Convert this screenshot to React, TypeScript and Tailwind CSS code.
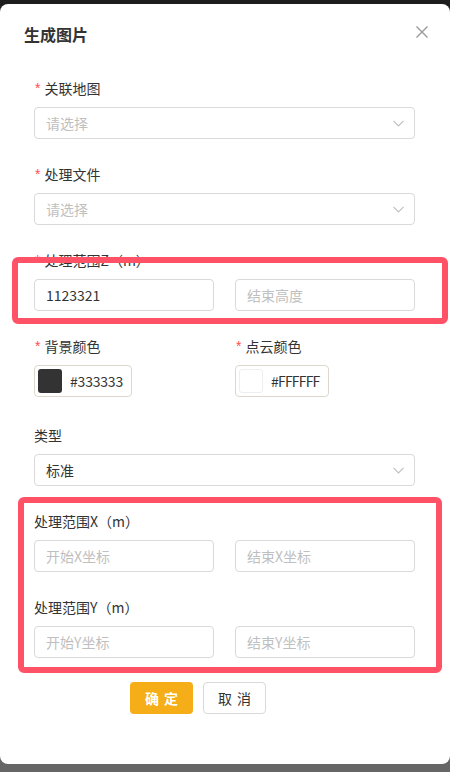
import React from 'react';

const FONT = '"Noto Sans CJK SC", "Noto Sans", sans-serif';

const Chevron = () => (
    <svg width="11" height="7" viewBox="0 0 11 7" fill="none" className="shrink-0">
        <path d="M0.5 0.8 L5.5 6 L10.5 0.8" stroke="#bfbfbf" strokeWidth="1.1" />
    </svg>
);

const Label = ({ text, required }: { text: string; required?: boolean }) => (
    <div className="h-[22px] leading-[22px] text-[14px] text-[#333] mb-[8px] flex items-center">
        {required && <span className="text-[#ff4d4f] mr-[4px] text-[14px] leading-none pl-[1px]" style={{ fontFamily: '"Liberation Sans", sans-serif' }}>*</span>}
        <span>{text}</span>
    </div>
);

const Select = ({ value, placeholder }: { value?: string; placeholder?: string }) => (
    <div className="h-[32px] border border-[#d9d9d9] rounded-[4px] pl-[11px] pr-[10px] flex items-center justify-between text-[14px]">
        {value ? <span className="text-[#333]">{value}</span> : <span className="text-[#bfbfbf]">{placeholder}</span>}
        <Chevron />
    </div>
);

const Input = ({ value, placeholder }: { value?: string; placeholder?: string }) => (
    <div className="h-[32px] border border-[#d9d9d9] rounded-[4px] px-[11px] flex items-center text-[14px]">
        {value ? <span className="text-[#333]">{value}</span> : <span className="text-[#bfbfbf]">{placeholder}</span>}
    </div>
);

const ColorPicker = ({ color, light }: { color: string; light?: boolean }) => (
    <div className="inline-flex h-[32px] items-center gap-[8px] border border-[#ddd8cc] rounded-[4px] pl-[3px] pr-[8px]">
        <div className={`w-[24px] h-[24px] rounded-[3px] ${light ? 'border border-[#eeeeee]' : ''}`} style={{ backgroundColor: color }} />
        <span className={`text-[14px] text-[#333] ${light ? 'tracking-[-0.8px]' : 'tracking-[-0.2px]'}`}>{color}</span>
    </div>
);

export default function App() {
    return (
        <div className="w-[450px] h-[772px] pt-[4px] bg-[linear-gradient(to_bottom,#1d1d1d_50%,#666666_50%)]" style={{ fontFamily: FONT }}>
            <div className="relative h-[760px] bg-white rounded-[8px]">
                <div className="pt-[18px] pl-[24px] pr-[22px] flex items-start justify-between">
                    <h3 className="text-[16px] leading-[24px] font-bold text-[#333]">生成图片</h3>
                    <button className="mt-[4px]">
                        <svg width="12" height="12" viewBox="0 0 12 12">
                            <path d="M0.5 0.5 L11.5 11.5 M11.5 0.5 L0.5 11.5" stroke="#999" strokeWidth="1.4" />
                        </svg>
                    </button>
                </div>

                <div className="pt-[31px] pl-[34px] pr-[35px]">
                    <div className="mb-[24px]">
                        <Label text="关联地图" required />
                        <Select placeholder="请选择" />
                    </div>
                    <div className="mb-[24px]">
                        <Label text="处理文件" required />
                        <Select placeholder="请选择" />
                    </div>
                    <div className="mb-[24px]">
                        <Label text="处理范围Z（m）" required />
                        <div className="grid grid-cols-2 gap-[21px]">
                            <Input value="1123321" />
                            <Input placeholder="结束高度" />
                        </div>
                    </div>
                    <div className="grid grid-cols-2 gap-[21px] mb-[26px]">
                        <div>
                            <Label text="背景颜色" required />
                            <ColorPicker color="#333333" />
                        </div>
                        <div>
                            <Label text="点云颜色" required />
                            <ColorPicker color="#FFFFFF" light />
                        </div>
                    </div>
                    <div className="mb-[24px]">
                        <Label text="类型" />
                        <Select value="标准" />
                    </div>
                    <div className="mb-[24px]">
                        <Label text="处理范围X（m）" />
                        <div className="grid grid-cols-2 gap-[21px]">
                            <Input placeholder="开始X坐标" />
                            <Input placeholder="结束X坐标" />
                        </div>
                    </div>
                    <div className="mb-[24px]">
                        <Label text="处理范围Y（m）" />
                        <div className="grid grid-cols-2 gap-[21px]">
                            <Input placeholder="开始Y坐标" />
                            <Input placeholder="结束Y坐标" />
                        </div>
                    </div>
                    <div className="flex gap-[10px] ml-[96px]">
                        <button className="w-[63px] h-[32px] rounded-[4px] bg-[#f5ae17] text-white text-[14px] font-bold flex items-center justify-center gap-[5px]">
                            <span>确</span><span>定</span>
                        </button>
                        <button className="w-[63px] h-[32px] rounded-[4px] border border-[#d9d9d9] bg-white text-[#333] text-[14px] flex items-center justify-center gap-[5px]">
                            <span>取</span><span>消</span>
                        </button>
                    </div>
                </div>

                {/* annotation boxes */}
                <div className="absolute left-[12px] top-[253px] w-[436px] h-[67px] border-[6px] border-[#ff5266] rounded-[6px] pointer-events-none" />
                <div className="absolute left-[18px] top-[493px] w-[424px] h-[176px] border-[6px] border-[#ff5266] rounded-[6px] pointer-events-none" />
            </div>
        </div>
    );
}
